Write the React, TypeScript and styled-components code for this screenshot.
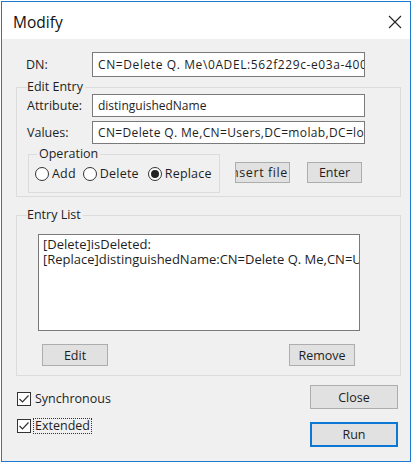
import styled, { createGlobalStyle } from "styled-components";

const GlobalStyle = createGlobalStyle`
  html, body {
    margin: 0;
    padding: 0;
    background: #ffffff;
  }
  body {
    font-family: "Open Sans", "Noto Sans", Arial, sans-serif;
    font-size: 12px;
    color: #1e1e1e;
  }
`;

const Window = styled.div`
  margin: 1px 0 0 1px;
  width: 410px;
  height: 461px;
  box-sizing: border-box;
  border: 1px solid #1b79d2;
  background: #f0f0f0;
  display: flex;
  flex-direction: column;
`;

const TitleBar = styled.div`
  height: 37px;
  background: #ffffff;
  display: flex;
  align-items: center;
  justify-content: space-between;
  padding: 3px 8px 0 11px;
  box-sizing: border-box;
`;

const Title = styled.span`
  font-size: 15.5px;
  color: #111;
`;

const CloseIcon = styled.svg`
  width: 14px;
  height: 14px;
`;

const Body = styled.div`
  padding: 0 9px 0 14px;
  display: flex;
  flex-direction: column;
`;

const FieldRow = styled.div<{ $top?: number; $indent?: number }>`
  display: flex;
  align-items: center;
  margin-top: ${(p) => p.$top ?? 0}px;
  padding-left: ${(p) => p.$indent ?? 0}px;
`;

const Label = styled.label<{ $width: number }>`
  width: ${(p) => p.$width}px;
  white-space: nowrap;
  font-size: 12.5px;
`;

const TextBox = styled.div<{ $height: number; $spacing?: number }>`
  width: 273px;
  height: ${(p) => p.$height}px;
  box-sizing: border-box;
  border: 1px solid #7a7a7a;
  background: #fff;
  padding: 0 5px;
  display: flex;
  align-items: center;
  white-space: nowrap;
  overflow: hidden;
  letter-spacing: ${(p) => p.$spacing ?? 0}px;
`;

const Group = styled.fieldset<{ $top: number; $pad: number }>`
  margin: ${(p) => p.$top}px 0 0 0;
  padding: 0 10px ${(p) => p.$pad}px 10px;
  border: 1px solid #dcdcdc;
  min-width: 0;
`;

const Legend = styled.legend`
  padding: 0 2px 0 0;
  margin-left: 0;
  line-height: 14px;
  font-size: 12.5px;
  color: #1e1e1e;
`;

const OperationRow = styled.div`
  display: flex;
  align-items: flex-start;
  margin-top: 3px;
`;

const OperationGroup = styled.fieldset`
  margin: 0 0 0 1px;
  width: 192px;
  height: 46px;
  box-sizing: border-box;
  padding: 4px 6px 0 6px;
  border: 1px solid #dcdcdc;
  display: flex;
  align-items: flex-start;
`;

const OpLegend = styled.legend`
  padding: 0 2px;
  margin-left: 2px;
  line-height: 14px;
  font-size: 12.5px;
`;

const Radio = styled.span<{ $gap: number }>`
  display: flex;
  align-items: center;
  margin-right: ${(p) => p.$gap}px;
  font-size: 12.5px;
  letter-spacing: 0.2px;
`;

const RadioDot = styled.span<{ $on?: boolean }>`
  width: 14px;
  height: 14px;
  box-sizing: border-box;
  border: 1px solid #333;
  border-radius: 50%;
  background: #fff;
  margin-right: 3px;
  display: flex;
  align-items: center;
  justify-content: center;
  &::after {
    content: "";
    width: 8px;
    height: 8px;
    border-radius: 50%;
    background: ${(p) => (p.$on ? "#222" : "transparent")};
  }
`;

const Button = styled.button<{ $w: number; $h: number; $focus?: boolean }>`
  width: ${(p) => p.$w}px;
  height: ${(p) => p.$h}px;
  box-sizing: border-box;
  padding: 0;
  font: inherit;
  font-size: 12.5px;
  color: #1e1e1e;
  background: #e1e1e1;
  border: ${(p) => (p.$focus ? "2px solid #0a78d4" : "1px solid #adadad")};
  white-space: nowrap;
  overflow: hidden;
  display: flex;
  align-items: center;
  justify-content: center;
`;

const ClipButton = styled(Button)`
  justify-content: flex-end;
  padding-right: 1px;
  letter-spacing: 0.6px;
`;

const OpButtons = styled.div`
  display: flex;
  gap: 17px;
  margin: 15px 0 0 15px;
`;

const ListBox = styled.div`
  margin: 12px 0 0 11px;
  width: 322px;
  height: 97px;
  box-sizing: border-box;
  border: 1px solid #7a7a7a;
  background: #fff;
  padding: 2px 4px;
  overflow: hidden;
  font-size: 13px;
  line-height: 15px;
  white-space: nowrap;
`;

const ListButtons = styled.div`
  display: flex;
  justify-content: space-between;
  width: 313px;
  margin: 13px 0 0 15px;
`;

const Footer = styled.div`
  display: flex;
  justify-content: space-between;
  margin-top: 9px;
`;

const Checks = styled.div`
  display: flex;
  flex-direction: column;
  gap: 12px;
  padding-top: 6px;
  margin-left: 1px;
`;

const Check = styled.div`
  display: flex;
  align-items: center;
  height: 15px;
  font-size: 12.5px;
`;

const CheckBox = styled.span`
  width: 14px;
  height: 14px;
  box-sizing: border-box;
  border: 1px solid #333;
  background: #fff;
  margin-right: 3px;
  display: flex;
  align-items: center;
  justify-content: center;
`;

const CheckText = styled.span<{ $focus?: boolean }>`
  outline: ${(p) => (p.$focus ? "1px dotted #333" : "none")};
  padding: 0 1px;
  line-height: 14px;
`;

const Actions = styled.div`
  display: flex;
  flex-direction: column;
  gap: 13px;
  margin-right: 3px;
`;

function Tick() {
  return (
    <svg width="12" height="12" viewBox="0 0 12 12">
      <path d="M1.5 6 L4.5 9 L10.5 2.5" stroke="#333" strokeWidth="1.2" fill="none" />
    </svg>
  );
}

export default function App() {
  return (
    <>
      <GlobalStyle />
      <Window>
        <TitleBar>
          <Title>Modify</Title>
          <CloseIcon viewBox="0 0 14 14">
            <path d="M1 1 L13 13 M13 1 L1 13" stroke="#222" strokeWidth="1.1" />
          </CloseIcon>
        </TitleBar>
        <Body>
          <FieldRow $top={13} $indent={10}>
            <Label $width={66}>DN:</Label>
            <TextBox $height={25} $spacing={0.6}>
              CN=Delete Q. Me\0ADEL:562f229c-e03a-4001
            </TextBox>
          </FieldRow>

          <Group $top={3} $pad={3}>
            <Legend>Edit Entry</Legend>
            <FieldRow>
              <Label $width={65}>Attribute:</Label>
              <TextBox $height={23}>distinguishedName</TextBox>
            </FieldRow>
            <FieldRow $top={4}>
              <Label $width={65}>Values:</Label>
              <TextBox $height={23} $spacing={0.35}>
                CN=Delete Q. Me,CN=Users,DC=molab,DC=local
              </TextBox>
            </FieldRow>
            <OperationRow>
              <OperationGroup>
                <OpLegend>Operation</OpLegend>
                <Radio $gap={7}>
                  <RadioDot />
                  Add
                </Radio>
                <Radio $gap={9}>
                  <RadioDot />
                  Delete
                </Radio>
                <Radio $gap={0}>
                  <RadioDot $on />
                  Replace
                </Radio>
              </OperationGroup>
              <OpButtons>
                <ClipButton $w={55} $h={21}>Insert file</ClipButton>
                <Button $w={55} $h={21}>Enter</Button>
              </OpButtons>
            </OperationRow>
          </Group>

          <Group $top={11} $pad={9}>
            <Legend>Entry List</Legend>
            <ListBox>
              <div>[Delete]isDeleted:</div>
              <div>[Replace]distinguishedName:CN=Delete Q. Me,CN=Users,DC=molab,DC=local</div>
            </ListBox>
            <ListButtons>
              <Button $w={66} $h={22}>Edit</Button>
              <Button $w={66} $h={22}>Remove</Button>
            </ListButtons>
          </Group>

          <Footer>
            <Checks>
              <Check>
                <CheckBox>
                  <Tick />
                </CheckBox>
                <CheckText>Synchronous</CheckText>
              </Check>
              <Check>
                <CheckBox>
                  <Tick />
                </CheckBox>
                <CheckText $focus>Extended</CheckText>
              </Check>
            </Checks>
            <Actions>
              <Button $w={88} $h={24}>Close</Button>
              <Button $w={88} $h={25} $focus>Run</Button>
            </Actions>
          </Footer>
        </Body>
      </Window>
    </>
  );
}
